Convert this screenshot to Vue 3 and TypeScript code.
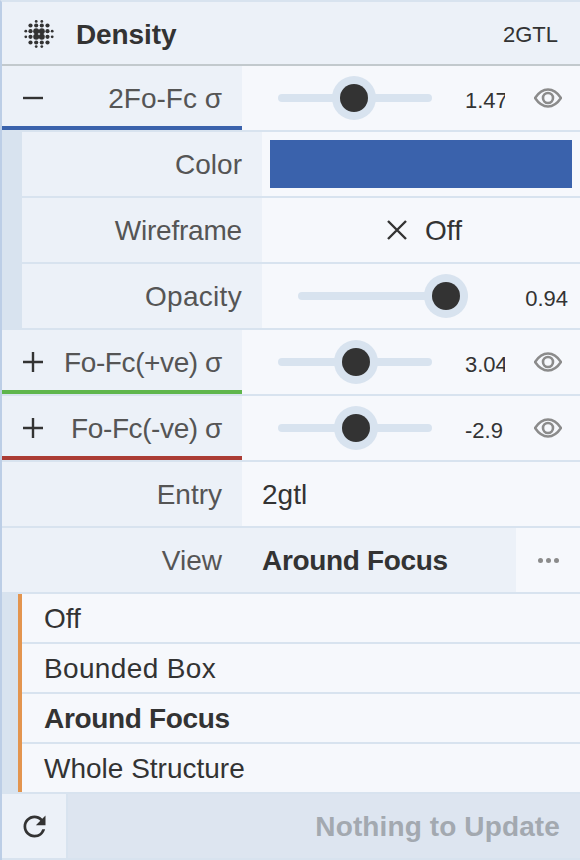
<script setup lang="ts">
import { ref } from "vue";

const channels = [
  { label: "Fo-Fc(+ve) σ", value: "3.04", thumb: 78, color: "#5fb64c" },
  { label: "Fo-Fc(-ve) σ", value: "-2.9", thumb: 78, color: "#ab3c35" },
];

const options = ["Off", "Bounded Box", "Around Focus", "Whole Structure"];
const selected = ref("Around Focus");

// density icon: 4x4 grid, small dots on each side, heavier centre
const dots: [number, number, number][] = [];
for (const x of [-8.5, -2.8, 2.8, 8.5]) {
  for (const y of [-8.5, -2.8, 2.8, 8.5]) {
    const inner = Math.abs(x) < 4 && Math.abs(y) < 4;
    dots.push([x, y, inner ? 3 : 2.1]);
  }
}
for (const s of [-2.8, 2.8]) {
  dots.push([s, -12.6, 1.4], [s, 12.6, 1.4], [-13.2, s, 1.4], [13.2, s, 1.4]);
}
</script>

<template>
  <div class="panel">
    <header class="head">
      <svg class="density-icon" viewBox="-15 -15 30 30" width="30" height="30">
        <circle v-for="(d, i) in dots" :key="i" :cx="d[0]" :cy="d[1]" :r="d[2]" fill="#333" />
      </svg>
      <span class="head-title">Density</span>
      <span class="head-entry">2GTL</span>
    </header>

    <div class="row row--channel">
      <div class="label label--toggle" style="--bar: #3a62ac">
        <svg class="toggle" viewBox="0 0 20 20" width="20" height="20"><path d="M0 10h20" /></svg>
        <span class="txt">2Fo-Fc σ</span>
      </div>
      <div class="control">
        <div class="slider">
          <div class="track"></div>
          <div class="thumb" style="left: 76px"></div>
        </div>
        <div class="value"><span>1.47</span></div>
        <svg class="eye" viewBox="0 0 28 20" width="28" height="20">
          <path d="M1 10C5 4 9 1.5 14 1.5S23 4 27 10c-4 6-8 8.500-13 8.500S5 16 1 10Z" />
          <circle cx="14" cy="10" r="5" />
        </svg>
      </div>
    </div>

    <div class="group">
      <div class="row">
        <div class="label"><span class="txt">Color</span></div>
        <div class="control control--swatch"><div class="swatch"></div></div>
      </div>
      <div class="row">
        <div class="label"><span class="txt txt--wire">Wireframe</span></div>
        <div class="control control--center">
          <svg class="close" viewBox="0 0 20 20" width="20" height="20"><path d="M1 1l18 18M19 1L1 19" /></svg>
          <span class="txt">Off</span>
        </div>
      </div>
      <div class="row">
        <div class="label"><span class="txt txt--opacity">Opacity</span></div>
        <div class="control control--opacity">
          <div class="slider slider--wide">
            <div class="track"></div>
            <div class="thumb" style="left: 148px"></div>
          </div>
          <div class="value value--wide">0.94</div>
        </div>
      </div>
    </div>

    <div v-for="c in channels" :key="c.label" class="row row--channel">
      <div class="label label--toggle" :style="{ '--bar': c.color }">
        <svg class="toggle" viewBox="0 0 20 20" width="20" height="20"><path d="M0 10h20M10 0v20" /></svg>
        <span class="txt txt--fofc">{{ c.label }}</span>
      </div>
      <div class="control">
        <div class="slider">
          <div class="track"></div>
          <div class="thumb" :style="{ left: c.thumb + 'px' }"></div>
        </div>
        <div class="value"><span>{{ c.value }}</span></div>
        <svg class="eye" viewBox="0 0 28 20" width="28" height="20">
          <path d="M1 10C5 4 9 1.5 14 1.5S23 4 27 10c-4 6-8 8.500-13 8.500S5 16 1 10Z" />
          <circle cx="14" cy="10" r="5" />
        </svg>
      </div>
    </div>

    <div class="row">
      <div class="label"><span class="txt">Entry</span></div>
      <div class="control control--text"><span class="txt">2gtl</span></div>
    </div>

    <div class="row">
      <div class="label"><span class="txt">View</span></div>
      <div class="view-current"><span class="txt txt--bold">Around Focus</span></div>
      <div class="more"><i></i><i></i><i></i></div>
    </div>

    <div class="menu">
      <div class="menu-list">
        <div
          v-for="o in options"
          :key="o"
          class="option"
          :class="{ 'option--active': o === selected, 'option--wide': o === 'Bounded Box' }"
        >{{ o }}</div>
      </div>
    </div>

    <footer class="foot">
      <div class="refresh">
        <svg viewBox="0 0 24 24" width="33" height="33">
          <path fill="#333" d="M17.650 6.350A7.958 7.958 0 0 0 12 4c-4.420 0-7.990 3.580-7.990 8s3.570 8 7.990 8c3.730 0 6.840-2.550 7.730-6h-2.080A5.990 5.990 0 0 1 12 18c-3.310 0-6-2.690-6-6s2.690-6 6-6c1.660 0 3.140.690 4.220 1.780L13 11h7V4l-2.350 2.350Z" />
        </svg>
      </div>
      <div class="update"><span class="txt">Nothing to Update</span></div>
    </footer>
  </div>
</template>

<style scoped>
.panel {
  width: 580px;
  height: 860px;
  box-sizing: border-box;
  border-left: 2px solid #bccee6;
  border-top: 2px solid #d8e3ef;
  background: #f6f8fc;
  font-family: "Liberation Sans", Arial, sans-serif;
  font-size: 28px;
  color: #333;
  overflow: hidden;
}

.txt {
  padding-top: 2px;
}

.txt--wire {
  letter-spacing: -0.2px;
}

.txt--opacity {
  letter-spacing: 0.3px;
}

.txt--fofc {
  letter-spacing: -0.4px;
}

.txt--bold {
  letter-spacing: -0.33px;
}

.head {
  display: flex;
  align-items: center;
  height: 62px;
  background: #ecf1f8;
  border-bottom: 2px solid #c2c9cd;
  padding: 0 22px 0 22px;
}

.density-icon {
  margin: 2px 22px 0 0;
}

.head-title {
  font-weight: 700;
  padding-top: 3px;
  letter-spacing: -0.1px;
}

.head-entry {
  margin-left: auto;
  font-size: 22px;
  padding-top: 3px;
}

.row {
  display: flex;
  height: 64px;
  border-bottom: 2px solid #d8e3ef;
}

.label {
  flex: 0 0 240px;
  box-sizing: border-box;
  display: flex;
  align-items: center;
  justify-content: flex-end;
  padding-right: 20px;
  background: #ecf1f8;
  color: #555;
}

.label--toggle {
  position: relative;
  justify-content: space-between;
  padding-left: 21px;
}

.label--toggle::after {
  content: "";
  position: absolute;
  left: 0;
  right: 0;
  bottom: 0;
  height: 4px;
  background: var(--bar);
}

.toggle {
  stroke: #333;
  stroke-width: 2.400;
  fill: none;
}

.control {
  flex: 1;
  display: flex;
  align-items: center;
  min-width: 0;
}

.slider {
  position: relative;
  flex: 0 0 154px;
  height: 64px;
  margin-left: 36px;
}

.slider--wide {
  flex-basis: 170px;
}

.track {
  position: absolute;
  left: 0;
  right: 0;
  top: 28px;
  height: 8px;
  border-radius: 4px;
  background: #d8e3ef;
}

.thumb {
  position: absolute;
  top: 18px;
  width: 28px;
  height: 28px;
  margin-left: -14px;
  border-radius: 50%;
  background: #333;
  box-shadow: 0 0 0 8px #d8e3ef;
}

.value {
  width: 40px;
  margin-left: 33px;
  padding-top: 5px;
  overflow: hidden;
  white-space: nowrap;
  font-size: 22px;
}

.value--wide {
  width: auto;
  margin-left: auto;
  padding-right: 12px;
}

.eye {
  margin-left: 29px;
  fill: none;
  stroke: #8b8b8b;
  stroke-width: 2.600;
}

.group {
  padding-left: 20px;
  background: #d8e3ef;
}

.group .row {
  background: #f6f8fc;
}

.control--swatch {
  padding: 8px;
}

.swatch {
  width: 100%;
  height: 100%;
  background: #3a62ac;
}

.control--center {
  justify-content: center;
  gap: 18px;
  padding-left: 7px;
}

.close {
  stroke: #333;
  stroke-width: 2.400;
  fill: none;
}

.control--text {
  padding-left: 20px;
}

.view-current {
  flex: 0 0 274px;
  box-sizing: border-box;
  display: flex;
  align-items: center;
  padding-left: 20px;
  background: #ecf1f8;
  font-weight: 700;
}

.more {
  flex: 1;
  display: flex;
  align-items: center;
  justify-content: center;
  gap: 3px;
}

.more i {
  width: 5px;
  height: 5px;
  border-radius: 50%;
  background: #8b8b8b;
}

.menu {
  padding-left: 16px;
  background: #d8e3ef;
  border-bottom: 2px solid #d8e3ef;
}

.menu-list {
  display: flex;
  flex-direction: column;
  gap: 2px;
  border-left: 4px solid #e3954f;
}

.option {
  height: 48px;
  line-height: 50px;
  padding-left: 22px;
  background: #f6f8fc;
}

.option--wide {
  letter-spacing: 0.35px;
}

.option--active {
  font-weight: 700;
  letter-spacing: -0.33px;
}

.foot {
  display: flex;
  height: 64px;
  background: #dde5f0;
  border-bottom: 2px solid #d8e3ef;
}

.refresh {
  flex: 0 0 64px;
  display: flex;
  align-items: center;
  justify-content: center;
  background: #ecf1f8;
  border-right: 2px solid #d8e3ef;
}

.update {
  flex: 1;
  display: flex;
  align-items: center;
  justify-content: flex-end;
  padding-right: 20px;
  font-weight: 700;
  letter-spacing: 0.12px;
  color: #a3a9b0;
}
</style>
